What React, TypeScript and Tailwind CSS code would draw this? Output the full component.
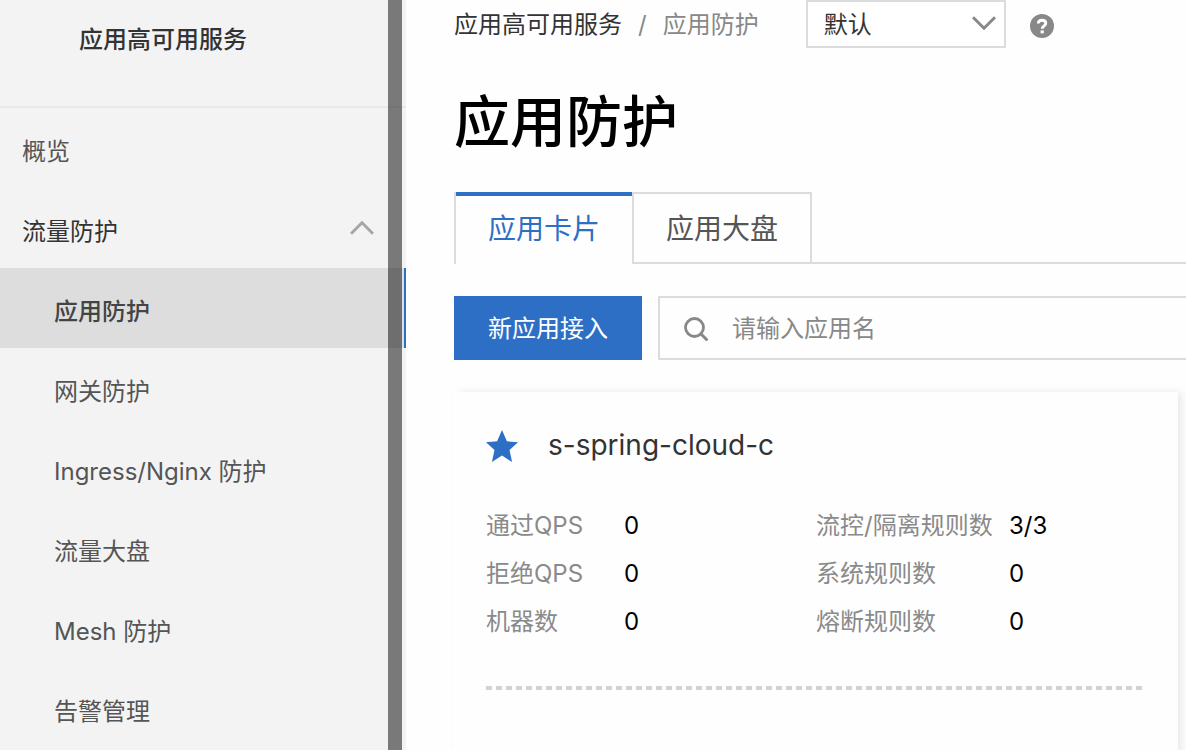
import { useState } from "react";
import clsx from "clsx";

type Stat = { label: string; value: string };

const navItems = [
  "应用防护",
  "网关防护",
  "Ingress/Nginx 防护",
  "流量大盘",
  "Mesh 防护",
  "告警管理",
];

const tabs = ["应用卡片", "应用大盘"];

const trafficStats: Stat[] = [
  { label: "通过QPS", value: "0" },
  { label: "拒绝QPS", value: "0" },
  { label: "机器数", value: "0" },
];

const ruleStats: Stat[] = [
  { label: "流控/隔离规则数", value: "3/3" },
  { label: "系统规则数", value: "0" },
  { label: "熔断规则数", value: "0" },
];

function Chevron({ className }: { className?: string }) {
  return (
    <svg viewBox="0 0 24 14" className={className} fill="none" aria-hidden="true">
      <path d="M1 1.2 12 12.2 23 1.2" stroke="currentColor" strokeWidth="3" />
    </svg>
  );
}

function Sidebar() {
  const [open, setOpen] = useState(true);
  const [active, setActive] = useState("应用防护");

  return (
    <aside className="relative w-[406px] shrink-0 bg-[#f3f3f3]">
      <div className="flex h-[108px] border-b-2 border-[#e9e9e9] pt-[22px] pl-[79px]">
        <h2 className="text-2xl leading-9 font-medium text-[#333]">应用高可用服务</h2>
      </div>

      <nav className="text-2xl text-[#555]">
        <a href="#overview" className="flex h-20 items-center pt-2 pl-[22px]">
          概览
        </a>
        <button
          type="button"
          aria-expanded={open}
          onClick={() => setOpen(!open)}
          className="flex h-20 w-full items-center justify-between pr-8 pl-[22px] text-[#333]"
        >
          <span className="pt-2">流量防护</span>
          <Chevron
            className={clsx("h-3.5 w-6 text-[#a6a6a6]", open && "rotate-180")}
          />
        </button>
        {open && (
          <ul>
            {navItems.map((item) => (
              <li key={item}>
                <a
                  href="#nav"
                  onClick={() => setActive(item)}
                  className={clsx(
                    "flex h-20 items-center border-r-2 pt-2 pl-[54px]",
                    item === active
                      ? "border-[#2e6fc6] bg-[#ddd] font-medium text-[#444]"
                      : "border-transparent",
                  )}
                >
                  {item}
                </a>
              </li>
            ))}
          </ul>
        )}
      </nav>

      {/* scrollbar thumb, floats over the menu */}
      <div className="pointer-events-none absolute inset-y-0 right-1 w-3.5 bg-black/50" />
    </aside>
  );
}

function StatList({ stats, labelClass }: { stats: Stat[]; labelClass: string }) {
  return (
    <dl className="text-2xl leading-[48px]">
      {stats.map((stat) => (
        <div key={stat.label} className="flex">
          <dt className={clsx("shrink-0 text-[#8a8a8a]", labelClass)}>{stat.label}</dt>
          <dd className="text-black">{stat.value}</dd>
        </div>
      ))}
    </dl>
  );
}

function AppCard() {
  return (
    <article className="mt-8 mr-2 min-h-[400px] bg-[#fefefe] px-8 pt-8 shadow-[4px_0_8px_rgba(0,0,0,0.08)]">
      <header className="flex h-11 items-center gap-[30px]">
        <svg viewBox="0 0 32 32" className="size-8 text-[#2e6fc6]" aria-hidden="true">
          <path
            fill="currentColor"
            d="M16 0 20.900 11.300 32 12.200 23.500 20 26.100 32 16 25.600 5.900 32 8.500 20 0 12.200 11.100 11.300Z"
          />
        </svg>
        <h3 className="pb-0.5 text-[28px] leading-10 text-[#333]">s-spring-cloud-c</h3>
      </header>

      <div className="mt-[34px] grid grid-cols-2">
        <StatList stats={trafficStats} labelClass="w-[138px]" />
        <StatList stats={ruleStats} labelClass="w-[193px]" />
      </div>

      <div className="mt-10 h-1 bg-[repeating-linear-gradient(90deg,#d3d3d3_0_6px,transparent_6px_10px)]" />
    </article>
  );
}

export default function App() {
  const [tab, setTab] = useState("应用卡片");

  return (
    <div className="flex h-screen overflow-hidden bg-[#fefefe] font-['Inter','Noto_Sans_CJK_SC',sans-serif]">
      <Sidebar />

      <main className="min-w-0 flex-1 pl-12">
        <div className="flex h-12 items-center text-2xl">
          <nav className="flex items-center gap-4 pt-0.5">
            <a href="#home" className="text-[#333]">
              应用高可用服务
            </a>
            <span className="text-[#888]">/</span>
            <span className="text-[#888]">应用防护</span>
          </nav>

          <div className="relative ml-[47px]">
            <select
              aria-label="命名空间"
              className="h-12 w-[200px] appearance-none border-2 border-[#dcdcdc] bg-white pt-0.5 pl-4 text-[#333]"
            >
              <option>默认</option>
            </select>
            <Chevron className="pointer-events-none absolute top-4 right-2.5 h-3.5 w-6 text-[#888]" />
          </div>

          <button type="button" aria-label="帮助" className="ml-6 pt-1">
            <svg viewBox="0 0 24 24" className="size-6" fill="none" aria-hidden="true">
              <circle cx="12" cy="12" r="12" fill="#888" />
              <path
                d="M8.2 9.5C8.3 7.400 9.8 6.200 12 6.200s3.800 1.200 3.800 3.100c0 2.500-3.600 2.700-3.600 5.500"
                stroke="#fff"
                strokeWidth="2.900"
              />
              <path d="M10.600 16.400h3.200v3h-3.200z" fill="#fff" />
            </svg>
          </button>
        </div>

        <h1 className="mt-[34px] text-[56px] leading-[80px] font-medium text-black">应用防护</h1>

        <div role="tablist" className="mt-[30px] flex h-[72px] text-[28px]">
          {tabs.map((name) => (
            <button
              key={name}
              type="button"
              role="tab"
              aria-selected={tab === name}
              onClick={() => setTab(name)}
              className={clsx(
                "relative border-l-2 border-[#dcdcdc] px-8 pt-0.5 last-of-type:border-r-2",
                tab === name
                  ? "text-[#2e6fc6]"
                  : "border-t-2 border-b-2 text-[#555]",
              )}
            >
              {tab === name && (
                <span className="absolute inset-x-0 top-0 h-1 bg-[#2e6fc6]" />
              )}
              {name}
            </button>
          ))}
          <div className="flex-1 border-b-2 border-[#dcdcdc]" />
        </div>

        <div className="mt-8 flex h-16 gap-4 text-2xl">
          <button type="button" className="w-[188px] shrink-0 bg-[#2e6fc6] pt-0.5 text-white">
            新应用接入
          </button>
          <label className="flex flex-1 items-center gap-6 border-2 border-r-0 border-[#dcdcdc] bg-[#fefefe] pt-0.5 pl-6">
            <svg viewBox="0 0 24 24" className="size-6 shrink-0 text-[#888]" fill="none" aria-hidden="true">
              <circle cx="10.500" cy="10.500" r="9" stroke="currentColor" strokeWidth="2.800" />
              <path d="m17 17 5.500 5.500" stroke="currentColor" strokeWidth="3" strokeLinecap="round" />
            </svg>
            <input
              type="text"
              aria-label="应用名"
              placeholder="请输入应用名"
              className="min-w-0 flex-1 bg-transparent outline-none placeholder:text-[#888]"
            />
          </label>
        </div>

        <AppCard />
      </main>
    </div>
  );
}
